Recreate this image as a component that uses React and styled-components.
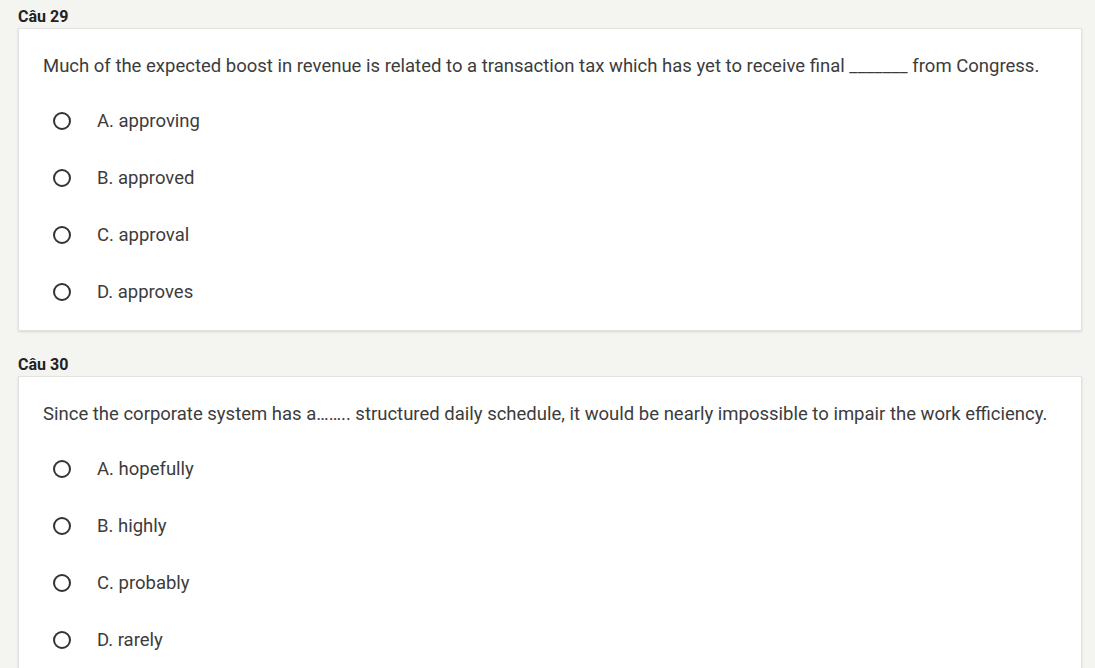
import React from "react";
import styled, { createGlobalStyle } from "styled-components";

const Global = createGlobalStyle`
  html, body { margin: 0; padding: 0; background: #f4f4f1; }
  body { font-family: Roboto, "Liberation Sans", Arial, sans-serif; color: #3c3c3c; }
`;

const Page = styled.div`
  padding: 7px 13px 0 18px;
  display: flex;
  flex-direction: column;
`;

const Block = styled.section`
  display: flex;
  flex-direction: column;
  margin-bottom: 24px;
`;

const Title = styled.div`
  font-size: 16px;
  font-weight: 700;
  line-height: 20px;
  color: #222;
  margin-bottom: 1px;
`;

const Card = styled.div`
  background: #fff;
  border: 1px solid #e2e2e0;
  box-shadow: 0 1px 2px rgba(0, 0, 0, 0.12);
  padding: 25px 24px 10px 24px;
`;

const Question = styled.div`
  font-size: 18.5px;
  line-height: 24px;
  color: #3c3c3c;
  margin-bottom: 14px;
`;

const Options = styled.div`
  display: flex;
  flex-direction: column;
`;

const Option = styled.label`
  display: flex;
  align-items: center;
  height: 57px;
  padding-left: 10px;
  cursor: pointer;
`;

const Radio = styled.span`
  width: 18px;
  height: 18px;
  box-sizing: border-box;
  border: 2px solid #333;
  border-radius: 50%;
  flex: none;
  margin-right: 26px;
`;

const OptionText = styled.span`
  font-size: 18.5px;
  line-height: 24px;
  color: #3c3c3c;
`;

const data = [
  {
    title: "Câu 29",
    q: "Much of the expected boost in revenue is related to a transaction tax which has yet to receive final _______ from Congress.",
    opts: ["A. approving", "B. approved", "C. approval", "D. approves"],
  },
  {
    title: "Câu 30",
    q: "Since the corporate system has a…….. structured daily schedule, it would be nearly impossible to impair the work efficiency.",
    opts: ["A. hopefully", "B. highly", "C. probably", "D. rarely"],
  },
];

export default function App() {
  return (
    <>
      <Global />
      <Page>
        {data.map((d) => (
          <Block key={d.title}>
            <Title>{d.title}</Title>
            <Card>
              <Question>{d.q}</Question>
              <Options>
                {d.opts.map((o) => (
                  <Option key={o}>
                    <Radio />
                    <OptionText>{o}</OptionText>
                  </Option>
                ))}
              </Options>
            </Card>
          </Block>
        ))}
      </Page>
    </>
  );
}
